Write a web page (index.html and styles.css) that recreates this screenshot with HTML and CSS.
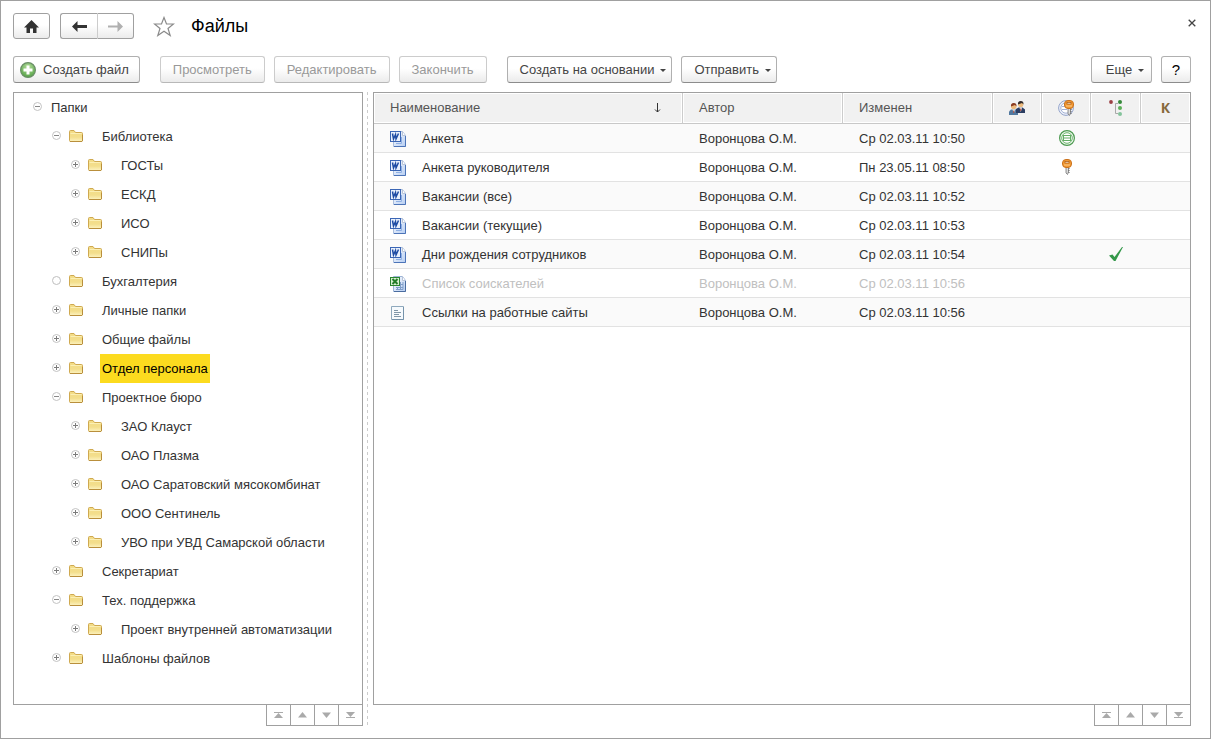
FILE: index.html
```
<!DOCTYPE html>
<html lang="ru">
<head>
<meta charset="utf-8">
<title>Файлы</title>
<link rel="stylesheet" href="styles.css">
</head>
<body>
<svg class="sprite" aria-hidden="true">
  <defs>
    <linearGradient id="g-folder" x1="0" y1="0" x2="0" y2="1"><stop offset="0" stop-color="#f3dc86"/><stop offset=".6" stop-color="#f3de8c"/><stop offset="1" stop-color="#fdf3c0"/></linearGradient>
    <linearGradient id="g-doc" x1="0" y1="0" x2="1" y2="1"><stop offset="0" stop-color="#ffffff"/><stop offset="1" stop-color="#b5cdf2"/></linearGradient>
    <radialGradient id="g-add" cx=".5" cy=".3" r=".7"><stop offset="0" stop-color="#b4dc9c"/><stop offset="1" stop-color="#55a345"/></radialGradient>
  </defs>
  <symbol id="i-folder" viewBox="0 0 14 12">
    <path d="M.5 10.500V1.500Q.5.5 1.500.5H5L6.500 2.500H12.500Q13.500 2.500 13.500 3.500V10.500Q13.500 11.500 12.500 11.500H1.500Q.5 11.500.5 10.500Z" fill="url(#g-folder)" stroke="#cfa950"/>
    <path d="M1.500 3.500H12.500" stroke="#fbefb4"/><path d="M1 11.500H13M13.500 5V11" stroke="#b98f3c"/>
  </symbol>
  <symbol id="i-plus" viewBox="0 0 9 9"><circle cx="4.500" cy="4.500" r="4" fill="#fff" stroke="#c2c2c2"/><path d="M2 4.500H7M4.500 2V7" stroke="#7c7c7c"/></symbol>
  <symbol id="i-minus" viewBox="0 0 9 9"><circle cx="4.500" cy="4.500" r="4" fill="#fff" stroke="#c2c2c2"/><path d="M2 4.500H7" stroke="#888"/></symbol>
  <symbol id="i-leaf" viewBox="0 0 9 9"><circle cx="4.500" cy="4.500" r="4" fill="#fff" stroke="#bebebe"/></symbol>
  <symbol id="i-word" viewBox="0 0 16 16">
    <path d="M3.500.5H12.500L15.500 4.500V15.500H3.500Z" fill="url(#g-doc)" stroke="#a9bddd"/>
    <path d="M12.500.5V4.500H15" fill="#fff" stroke="#b9c4d6"/><path d="M15.500 5V15.500H4" fill="none" stroke="#4c74b8"/>
    <path d="M11.500 6V12.500H6" fill="none" stroke="#8fb0e4"/>
    <rect x=".5" y=".5" width="10" height="10" fill="#e9f1fd" stroke="#3b66b5"/>
    <path d="M2.500 2.500L3.500 8L5.500 3.500L6 8L8.500 2.500" fill="none" stroke="#1d4ba3" stroke-width="1.500"/>
  </symbol>
  <symbol id="i-excel" viewBox="0 0 16 16">
    <path d="M3.500.5H12.500L15.500 4.500V15.500H3.500Z" fill="url(#g-doc)" stroke="#9db4d8"/>
    <path d="M12.500.5V4.500H15" fill="#fff" stroke="#b9c4d6"/><path d="M15.500 5V15.500H4" fill="none" stroke="#4a6c9f"/>
    <path d="M10.500 6V13.500M7.500 11V13.500M6 11.500H13M10 8.500H13M13 6V13.500H6" fill="none" stroke="#7f9dc8"/>
    <rect x=".5" y="1.500" width="9" height="8" fill="#d8efd2" stroke="#2c8530"/>
    <path d="M2.500 3L7.500 8M7.500 3L2.500 8" stroke="#227c27" stroke-width="2"/>
  </symbol>
  <symbol id="i-text" viewBox="0 0 16 16">
    <path d="M1.500 1.500H13.500V14.500H1.500Z" fill="#f6fafd" stroke="#8fa9bd"/><path d="M13.500 2V14.500H2" fill="none" stroke="#7593ab"/>
    <path d="M4 5.500H8M4 7.500H11M4 9.500H9M4 11.500H11" stroke="#7f96a8"/>
  </symbol>
  <symbol id="i-key" viewBox="0 0 10 16">
    <path d="M4 8H6.500V13L5.500 15.500L4 14Z" fill="#ddd" stroke="#777" stroke-width=".8"/><path d="M6.500 9.500H7.500M6.500 11.500H7.500M6.500 13.500H7.500" stroke="#666"/>
    <rect x=".5" y=".5" width="9" height="8" rx="3.500" fill="#f19a35" stroke="#cb721d"/>
    <rect x="3" y="2.500" width="4" height="1.500" fill="#fff3df" stroke="#a95812" stroke-width=".7"/><path d="M2 6H8" stroke="#ffc981"/>
  </symbol>
  <symbol id="i-stamp" viewBox="0 0 16 16">
    <circle cx="8" cy="8" r="7.400" fill="#f2faf1" stroke="#4c9a50" stroke-width="1.200"/><circle cx="8" cy="8" r="5.300" fill="#fff" stroke="#6bb36c"/>
    <rect x="4.500" y="5.500" width="7" height="5" fill="#fff" stroke="#65ad67"/><path d="M5 8H11" stroke="#65ad67"/>
  </symbol>
  <symbol id="i-stampkey" viewBox="0 0 17 16">
    <circle cx="8" cy="8" r="7.400" fill="#eef1f9" stroke="#93a3cb"/><circle cx="8" cy="8" r="5.200" fill="#fff" stroke="#a4b2d6"/><path d="M4 6.500H9M4 9.500H9" stroke="#a4b2d6"/>
    <use href="#i-key" x="6" y="0" width="10" height="16"/>
  </symbol>
  <symbol id="i-people" viewBox="0 0 16 14">
    <path d="M0 14V10.500L2 8.500H7L9 10.500V14Z" fill="#51789f"/><path d="M7 12V8L9.500 6.500H13.500L16 8.500V12Z" fill="#2b3d62"/>
    <path d="M3.500 8.500H6L4.800 12ZM10.500 6.500H13L11.800 11Z" fill="#fff"/>
    <circle cx="4.700" cy="5.500" r="2.700" fill="#edbb7e"/><circle cx="11.700" cy="3.500" r="2.600" fill="#edbb7e"/>
    <path d="M2 5.500Q1.500 2 4.700 2Q8 2 7.400 5.500L6 4Z" fill="#8a3b20"/><path d="M9 3.500Q8.500 0 11.700 0Q15 0 14.400 3.500L13 2Z" fill="#332b2b"/>
    <path d="M4.700 9.500V12M11.700 7.500V10" stroke="#a94434"/>
  </symbol>
  <symbol id="i-tree" viewBox="0 0 14 16">
    <circle cx="2" cy="2" r="1.900" fill="#9b4044"/><path d="M9 3.500H6.500V13.500H9" fill="none" stroke="#a9a9a9"/>
    <circle cx="11" cy="2" r="2" fill="#35883a"/><circle cx="11" cy="8" r="2" fill="#5ab057"/><circle cx="11" cy="14" r="2" fill="#83c39b"/>
  </symbol>
  <symbol id="i-check" viewBox="0 0 14 14"><path d="M0 8.500L3.500 7.500L5.500 10L13 0H14L6.500 14H5Z" fill="#34984a"/></symbol>
  <symbol id="i-first" viewBox="0 0 10 6"><path d="M0 .5H9" stroke="#aaa"/><path d="M0 6L4.500 1L9 6Z" fill="#aaa"/></symbol>
  <symbol id="i-up" viewBox="0 0 10 6"><path d="M0 5.500L4.500 0L9 5.500Z" fill="#aaa"/></symbol>
  <symbol id="i-down" viewBox="0 0 10 6"><path d="M0 .5L4.500 6L9 .5Z" fill="#aaa"/></symbol>
  <symbol id="i-last" viewBox="0 0 10 6"><path d="M0 5.500H9" stroke="#aaa"/><path d="M0 0L4.500 5L9 0Z" fill="#aaa"/></symbol>
</svg>

<main class="window">
  <header class="titlebar">
    <button class="btn btn-icon" aria-label="Домой"><svg width="15" height="13" viewBox="0 0 15 13"><path d="M7.500 0L15 7.500H12.500V13H9V8.500H6V13H2.500V7.500H0Z" fill="#333"/></svg></button>
    <div class="history">
      <button class="btn btn-icon history-back" aria-label="Назад"><svg width="15" height="11" viewBox="0 0 15 11"><path d="M0 5.500L5.500 0V4H15V7H5.500V11Z" fill="#333"/></svg></button>
      <button class="btn btn-icon history-next" aria-label="Вперед" disabled><svg width="15" height="11" viewBox="0 0 15 11"><path d="M15 5.500L9.500 0V4.500H0V6.500H9.500V11Z" fill="#b0b0b0"/></svg></button>
    </div>
    <button class="plain star" aria-label="Добавить в избранное"><svg width="22" height="21" viewBox="0 0 22 21"><path d="M11 1.500L13.500 8H20.500L15 12.500L17.200 19.500L11 15.300L4.800 19.500L7 12.500L1.500 8H8.500Z" fill="#fff" stroke="#8a8a8a" stroke-width="1.200"/></svg></button>
    <h1 class="title">Файлы</h1>
    <button class="plain close" aria-label="Закрыть"><svg width="8" height="8" viewBox="0 0 8 8"><path d="M.7.7L7.300 7.300M7.300.7L.7 7.300" stroke="#444" stroke-width="1.300"/></svg></button>
  </header>

  <div class="toolbar">
    <button class="btn btn-create"><svg width="16" height="16" viewBox="0 0 16 16"><circle cx="8" cy="8" r="7.400" fill="url(#g-add)" stroke="#6b8f68" stroke-width="1.200"/><path d="M8 3.500V12.500M3.500 8H12.500" stroke="#fff" stroke-width="3"/></svg>Создать файл</button>
    <div class="group">
      <button class="btn" disabled>Просмотреть</button>
      <button class="btn" disabled>Редактировать</button>
      <button class="btn" disabled>Закончить</button>
    </div>
    <div class="group">
      <button class="btn btn-menu">Создать на основании<span class="caret"></span></button>
      <button class="btn btn-menu">Отправить<span class="caret"></span></button>
    </div>
    <div class="group group-end">
      <button class="btn btn-menu">Еще<span class="caret"></span></button>
      <button class="btn btn-help" aria-label="Справка">?</button>
    </div>
  </div>

  <div class="content">
    <section class="pane">
      <div class="box">
        <ul class="tree">
          <li><div class="node"><button class="plain" aria-label="Свернуть"><svg class="toggle"><use href="#i-minus"/></svg></button><span class="root-label">Папки</span></div>
            <ul>
              <li><div class="node"><button class="plain" aria-label="Свернуть"><svg class="toggle"><use href="#i-minus"/></svg></button><svg class="folder"><use href="#i-folder"/></svg><span class="label">Библиотека</span></div>
                <ul>
                  <li><div class="node"><button class="plain" aria-label="Развернуть"><svg class="toggle"><use href="#i-plus"/></svg></button><svg class="folder"><use href="#i-folder"/></svg><span class="label">ГОСТы</span></div></li>
                  <li><div class="node"><button class="plain" aria-label="Развернуть"><svg class="toggle"><use href="#i-plus"/></svg></button><svg class="folder"><use href="#i-folder"/></svg><span class="label">ЕСКД</span></div></li>
                  <li><div class="node"><button class="plain" aria-label="Развернуть"><svg class="toggle"><use href="#i-plus"/></svg></button><svg class="folder"><use href="#i-folder"/></svg><span class="label">ИСО</span></div></li>
                  <li><div class="node"><button class="plain" aria-label="Развернуть"><svg class="toggle"><use href="#i-plus"/></svg></button><svg class="folder"><use href="#i-folder"/></svg><span class="label">СНИПы</span></div></li>
                </ul>
              </li>
              <li><div class="node"><svg class="toggle"><use href="#i-leaf"/></svg><svg class="folder"><use href="#i-folder"/></svg><span class="label">Бухгалтерия</span></div></li>
              <li><div class="node"><button class="plain" aria-label="Развернуть"><svg class="toggle"><use href="#i-plus"/></svg></button><svg class="folder"><use href="#i-folder"/></svg><span class="label">Личные папки</span></div></li>
              <li><div class="node"><button class="plain" aria-label="Развернуть"><svg class="toggle"><use href="#i-plus"/></svg></button><svg class="folder"><use href="#i-folder"/></svg><span class="label">Общие файлы</span></div></li>
              <li><div class="node"><button class="plain" aria-label="Развернуть"><svg class="toggle"><use href="#i-plus"/></svg></button><svg class="folder"><use href="#i-folder"/></svg><span class="label selected">Отдел персонала</span></div></li>
              <li><div class="node"><button class="plain" aria-label="Свернуть"><svg class="toggle"><use href="#i-minus"/></svg></button><svg class="folder"><use href="#i-folder"/></svg><span class="label">Проектное бюро</span></div>
                <ul>
                  <li><div class="node"><button class="plain" aria-label="Развернуть"><svg class="toggle"><use href="#i-plus"/></svg></button><svg class="folder"><use href="#i-folder"/></svg><span class="label">ЗАО Клауст</span></div></li>
                  <li><div class="node"><button class="plain" aria-label="Развернуть"><svg class="toggle"><use href="#i-plus"/></svg></button><svg class="folder"><use href="#i-folder"/></svg><span class="label">ОАО Плазма</span></div></li>
                  <li><div class="node"><button class="plain" aria-label="Развернуть"><svg class="toggle"><use href="#i-plus"/></svg></button><svg class="folder"><use href="#i-folder"/></svg><span class="label">ОАО Саратовский мясокомбинат</span></div></li>
                  <li><div class="node"><button class="plain" aria-label="Развернуть"><svg class="toggle"><use href="#i-plus"/></svg></button><svg class="folder"><use href="#i-folder"/></svg><span class="label">ООО Сентинель</span></div></li>
                  <li><div class="node"><button class="plain" aria-label="Развернуть"><svg class="toggle"><use href="#i-plus"/></svg></button><svg class="folder"><use href="#i-folder"/></svg><span class="label">УВО при УВД Самарской области</span></div></li>
                </ul>
              </li>
              <li><div class="node"><button class="plain" aria-label="Развернуть"><svg class="toggle"><use href="#i-plus"/></svg></button><svg class="folder"><use href="#i-folder"/></svg><span class="label">Секретариат</span></div></li>
              <li><div class="node"><button class="plain" aria-label="Свернуть"><svg class="toggle"><use href="#i-minus"/></svg></button><svg class="folder"><use href="#i-folder"/></svg><span class="label">Тех. поддержка</span></div>
                <ul>
                  <li><div class="node"><button class="plain" aria-label="Развернуть"><svg class="toggle"><use href="#i-plus"/></svg></button><svg class="folder"><use href="#i-folder"/></svg><span class="label">Проект внутренней автоматизации</span></div></li>
                </ul>
              </li>
              <li><div class="node"><button class="plain" aria-label="Развернуть"><svg class="toggle"><use href="#i-plus"/></svg></button><svg class="folder"><use href="#i-folder"/></svg><span class="label">Шаблоны файлов</span></div></li>
            </ul>
          </li>
        </ul>
      </div>
      <div class="pager">
        <button aria-label="В начало"><svg><use href="#i-first"/></svg></button>
        <button aria-label="Вверх"><svg><use href="#i-up"/></svg></button>
        <button aria-label="Вниз"><svg><use href="#i-down"/></svg></button>
        <button aria-label="В конец"><svg><use href="#i-last"/></svg></button>
      </div>
    </section>
    <div class="splitter"></div>
    <section class="pane">
      <div class="box">
        <table class="files">
          <colgroup><col><col class="c-author"><col class="c-date"><col class="c-flag"><col class="c-flag"><col class="c-mark"><col class="c-flag"></colgroup>
          <thead>
            <tr>
              <th scope="col"><div class="sorted">Наименование<svg width="7" height="10" viewBox="0 0 7 10"><path d="M3.500 0V9" stroke="#333"/><path d="M1 6.500L3.500 9L6 6.500" fill="none" stroke="#333"/></svg></div></th>
              <th scope="col">Автор</th>
              <th scope="col">Изменен</th>
              <th scope="col" class="flag" aria-label="Редактирует"><svg width="16" height="14"><use href="#i-people"/></svg></th>
              <th scope="col" class="flag" aria-label="Подпись"><svg width="17" height="16"><use href="#i-stampkey"/></svg></th>
              <th scope="col" class="flag" aria-label="Процессы"><svg width="14" height="16"><use href="#i-tree"/></svg></th>
              <th scope="col" class="flag key">К</th>
            </tr>
          </thead>
          <tbody>
            <tr><td><div class="name"><svg><use href="#i-word"/></svg>Анкета</div></td><td>Воронцова О.М.</td><td>Ср 02.03.11 10:50</td><td></td><td class="flag"><svg width="16" height="16"><use href="#i-stamp"/></svg></td><td></td><td></td></tr>
            <tr><td><div class="name"><svg><use href="#i-word"/></svg>Анкета руководителя</div></td><td>Воронцова О.М.</td><td>Пн 23.05.11 08:50</td><td></td><td class="flag"><svg width="10" height="16"><use href="#i-key"/></svg></td><td></td><td></td></tr>
            <tr><td><div class="name"><svg><use href="#i-word"/></svg>Вакансии (все)</div></td><td>Воронцова О.М.</td><td>Ср 02.03.11 10:52</td><td></td><td></td><td></td><td></td></tr>
            <tr><td><div class="name"><svg><use href="#i-word"/></svg>Вакансии (текущие)</div></td><td>Воронцова О.М.</td><td>Ср 02.03.11 10:53</td><td></td><td></td><td></td><td></td></tr>
            <tr><td><div class="name"><svg><use href="#i-word"/></svg>Дни рождения сотрудников</div></td><td>Воронцова О.М.</td><td>Ср 02.03.11 10:54</td><td></td><td></td><td class="flag"><svg width="14" height="14"><use href="#i-check"/></svg></td><td></td></tr>
            <tr class="muted"><td><div class="name"><svg><use href="#i-excel"/></svg>Список соискателей</div></td><td>Воронцова О.М.</td><td>Ср 02.03.11 10:56</td><td></td><td></td><td></td><td></td></tr>
            <tr><td><div class="name"><svg><use href="#i-text"/></svg>Ссылки на работные сайты</div></td><td>Воронцова О.М.</td><td>Ср 02.03.11 10:56</td><td></td><td></td><td></td><td></td></tr>
          </tbody>
        </table>
      </div>
      <div class="pager">
        <button aria-label="В начало"><svg><use href="#i-first"/></svg></button>
        <button aria-label="Вверх"><svg><use href="#i-up"/></svg></button>
        <button aria-label="Вниз"><svg><use href="#i-down"/></svg></button>
        <button aria-label="В конец"><svg><use href="#i-last"/></svg></button>
      </div>
    </section>
  </div>
</main>
</body>
</html>
```
FILE: styles.css
```
* { box-sizing: border-box; }
body { margin: 0; background: #fff; color: #333; font: 13px/16px "Liberation Sans", Arial, sans-serif; }
button { font: inherit; color: inherit; margin: 0; }
svg { display: block; flex: none; }
ul { list-style: none; margin: 0; padding: 0; }
.sprite { position: absolute; width: 0; height: 0; }

.window { display: flex; flex-direction: column; min-height: 100vh; border: 1px solid #a0a0a0; padding: 12px 19px 12px 12px; }

.titlebar { display: flex; align-items: center; height: 26px; }
.title { margin: 0 0 0 16px; font-size: 18px; line-height: 26px; font-weight: normal; color: #000; }
.plain { display: flex; border: 0; padding: 0; background: none; }
.star { margin-left: 19px; }
.close { margin: 0 -5px 6px auto; }

.btn { display: flex; align-items: center; justify-content: center; height: 27px; padding: 0 12px; border: 1px solid #b0b0b0; border-bottom-color: #8c8c8c; border-radius: 3px; background: linear-gradient(#fff 45%, #ebebeb); color: #444; white-space: nowrap; }
.btn:disabled { color: #999; border-color: #ccc; border-bottom-color: #b8b8b8; }
.btn-icon, .btn-icon:disabled { width: 37px; height: 26px; padding: 0; border-color: #a0a0a0; }
.history { display: flex; margin-left: 10px; }
.history-back { border-radius: 3px 0 0 3px; border-right: 0; }
.history-next:disabled { border-left-color: #ccc; border-radius: 0 3px 3px 0; }

.toolbar { display: flex; gap: 20px; margin-top: 17px; }
.group { display: flex; gap: 9px; }
.group-end { margin-left: auto; }
.btn-create { padding: 0 10px 0 6px; gap: 7px; }
.btn-menu { gap: 6px; min-width: 61px; padding-right: 5px; }
.btn-help { width: 30px; padding: 0; font-size: 15px; color: #000; }
.caret { margin-top: 2px; border: solid transparent; border-width: 3px 3px 0; border-top-color: #444; }

.content { flex: 1; display: grid; grid-template-columns: 350px 10px minmax(0, 1fr); margin-top: 9px; }
.pane { display: flex; flex-direction: column; min-width: 0; }
.box { flex: 1; border: 1px solid #a0a0a0; background: #fff; }
.splitter { width: 1px; margin-left: 4px; background: repeating-linear-gradient(#ccc 0 3px, transparent 3px 6px); }
.pager { display: flex; align-self: flex-end; margin-top: -1px; border: 1px solid #a0a0a0; }
.pager button { display: flex; align-items: center; justify-content: center; width: 24px; height: 20px; padding: 0; border: 0; border-right: 1px solid #a0a0a0; background: #fff; }
.pager button:last-child { width: 23px; border-right: 0; }
.pager svg { width: 10px; height: 6px; }

.tree { padding-left: 19px; }
.tree ul { padding-left: 19px; }
.node { display: flex; align-items: center; height: 29px; }
.toggle { width: 9px; height: 9px; margin-bottom: 2px; }
.node .folder { width: 14px; height: 12px; margin: 0 17px 1px 8px; }
.root-label { margin-left: 9px; }
.label { padding: 0 2px; line-height: 29px; white-space: nowrap; }
.selected { background: #fcdb1f; color: #000; }

.files { width: 100%; border-collapse: separate; border-spacing: 0; table-layout: fixed; }
.c-author { width: 160px; }
.c-date { width: 150px; }
.c-flag { width: 49px; }
.c-mark { width: 50px; }
.files th { height: 31px; padding: 0 16px; text-align: left; font-weight: normal; color: #555; background: #f1f1f1; border-right: 1px solid #ccc; border-bottom: 1px solid #c8c8c8; box-shadow: inset 0 0 0 1px #fff; }
.files th:last-child { border-right: 0; }
.files td { height: 29px; padding: 1px 16px 0; border-bottom: 1px solid #e2e2e2; white-space: nowrap; }
.files tbody tr:nth-child(odd) { background: #fafafa; }
.files .flag { padding: 0; text-align: center; }
.flag svg { margin: 0 auto; }
.files .key { font: bold 14px/16px "Open Sans", sans-serif; color: #86683a; }
.sorted { display: flex; align-items: center; justify-content: space-between; padding-right: 5px; }
.name { display: flex; align-items: center; gap: 16px; }
.name svg { width: 16px; height: 16px; }
.files .muted { color: #c0c0c0; }
```
